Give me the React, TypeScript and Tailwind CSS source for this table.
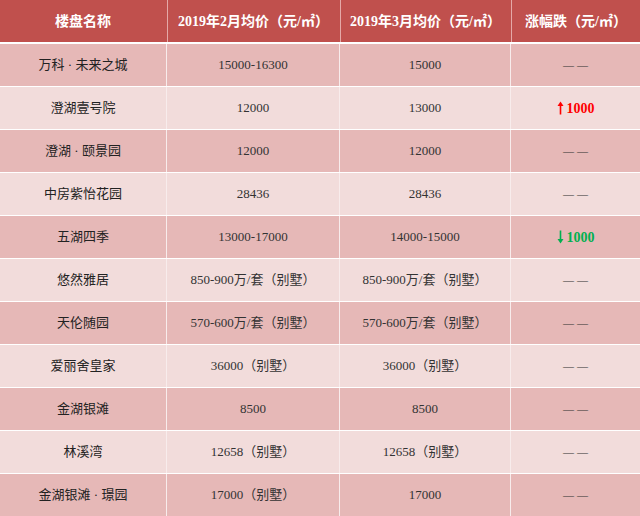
import React from 'react';

type Change = { dir: 'up' | 'down'; value: string } | null;

type Row = {
  name: string;
  feb: string;
  mar: string;
  change: Change;
};

const rows: Row[] = [
  { name: '万科 · 未来之城', feb: '15000-16300', mar: '15000', change: null },
  { name: '澄湖壹号院', feb: '12000', mar: '13000', change: { dir: 'up', value: '1000' } },
  { name: '澄湖 · 颐景园', feb: '12000', mar: '12000', change: null },
  { name: '中房紫怡花园', feb: '28436', mar: '28436', change: null },
  { name: '五湖四季', feb: '13000-17000', mar: '14000-15000', change: { dir: 'down', value: '1000' } },
  { name: '悠然雅居', feb: '850-900万/套（别墅）', mar: '850-900万/套（别墅）', change: null },
  { name: '天伦随园', feb: '570-600万/套（别墅）', mar: '570-600万/套（别墅）', change: null },
  { name: '爱丽舍皇家', feb: '36000（别墅）', mar: '36000（别墅）', change: null },
  { name: '金湖银滩', feb: '8500', mar: '8500', change: null },
  { name: '林溪湾', feb: '12658（别墅）', mar: '12658（别墅）', change: null },
  { name: '金湖银滩 · 璟园', feb: '17000（别墅）', mar: '17000', change: null },
];

const font = { fontFamily: '"Liberation Serif", "Noto Sans CJK SC", serif' };

function ChangeCell({ change }: { change: Change }) {
  if (!change) {
    return (
      <span className="flex items-center gap-[3px] text-[11px] font-bold text-[#333] leading-none">
        <span>—</span>
        <span>—</span>
      </span>
    );
  }
  const up = change.dir === 'up';
  return (
    <span className={`flex items-center gap-[3px] text-[14px] font-semibold ${up ? 'text-[#ff0000]' : 'text-[#00b050]'}`}>
      <svg width="7" height="14" viewBox="0 0 7 14" className="shrink-0">
        {up ? (
          <>
            <path d="M3.5 0.5 L0.5 5 L6.5 5 Z" fill="currentColor" />
            <rect x="2.7" y="4" width="1.6" height="9.5" fill="currentColor" />
          </>
        ) : (
          <>
            <rect x="2.7" y="0.5" width="1.6" height="9.5" fill="currentColor" />
            <path d="M3.5 13.5 L0.5 9 L6.5 9 Z" fill="currentColor" />
          </>
        )}
      </svg>
      {change.value}
    </span>
  );
}

export default function App() {
  return (
    <div className="w-[640px] h-[516px] bg-[#fbf1f1] overflow-hidden" style={font}>
      <div className="grid grid-cols-[166px_172px_170px_129px] gap-x-px h-[42px] bg-[#c0504d]">
        {['楼盘名称', '2019年2月均价（元/㎡）', '2019年3月均价（元/㎡）', '涨幅跌（元/㎡）'].map((h, i) => (
          <div
            key={h}
            className={`flex items-center justify-center text-white font-bold text-[14px] ${i > 0 ? 'border-l border-[#e5a9a7]' : ''}`}
          >
            {h}
          </div>
        ))}
      </div>
      <div className="h-[2px] bg-white" />
      <div className="flex flex-col gap-px bg-white">
        {rows.map((r, idx) => (
          <div
            key={r.name}
            className={`grid grid-cols-[166px_1px_172px_1px_170px_1px_129px] h-[42px] ${idx % 2 === 0 ? 'bg-[#e6b8b7]' : 'bg-[#f2dcdb]'}`}
          >
            <div className="flex items-center justify-center text-[13px] text-[#222]">{r.name}</div>
            <div className="bg-[#f8ecec]" />
            <div className="flex items-center justify-center text-[13px] text-[#333]">{r.feb}</div>
            <div className="bg-[#f8ecec]" />
            <div className="flex items-center justify-center text-[13px] text-[#333]">{r.mar}</div>
            <div className="bg-[#f8ecec]" />
            <div className="flex items-center justify-center">
              <ChangeCell change={r.change} />
            </div>
          </div>
        ))}
      </div>
    </div>
  );
}
